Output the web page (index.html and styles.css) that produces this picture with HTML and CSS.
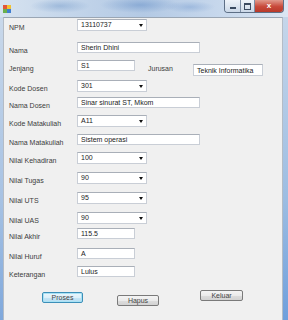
FILE: index.html
```html
<!DOCTYPE html>
<html lang="id">
<head>
  <meta charset="UTF-8">
  <meta name="viewport" content="width=device-width, initial-scale=1.0">
  <title>Form Nilai Mahasiswa</title>
  <link rel="stylesheet" href="styles.css">
</head>
<body>
  <div class="window">
    <div class="titlebar">
      <div class="app-icon">
        <span class="sq sq-red"></span><span class="sq sq-yellow"></span>
        <span class="sq sq-green"></span><span class="sq sq-blue"></span>
      </div>
      <div class="caption-buttons">
        <div class="cap-btn cap-min"><span class="min-glyph"></span></div>
        <div class="cap-btn cap-max"><span class="max-glyph"></span></div>
        <div class="cap-btn cap-close">x</div>
      </div>
    </div>
    <div class="frame">
      <div class="frame-left"></div>
      <div class="client">
        <div class="form">
          <label class="lbl">NPM</label>
          <div class="combo">13110737<span class="arrow"></span></div>

          <label class="lbl">Nama</label>
          <div class="tb tb-wide">Sherin Dhini</div>

          <label class="lbl">Jenjang</label>
          <div class="inline">
            <div class="tb tb-short">S1</div>
            <label class="lbl lbl-inline">Jurusan</label>
            <div class="tb tb-mid">Teknik Informatika</div>
          </div>

          <label class="lbl">Kode Dosen</label>
          <div class="combo">301<span class="arrow"></span></div>

          <label class="lbl">Nama Dosen</label>
          <div class="tb tb-wide">Sinar sinurat ST, Mkom</div>

          <label class="lbl">Kode Matakuliah</label>
          <div class="combo">A11<span class="arrow"></span></div>

          <label class="lbl">Nama Matakuliah</label>
          <div class="tb tb-wide">Sistem operasi</div>

          <label class="lbl">Nilai Kehadiran</label>
          <div class="combo">100<span class="arrow"></span></div>

          <label class="lbl">Nilai Tugas</label>
          <div class="combo">90<span class="arrow"></span></div>

          <label class="lbl">Nilai UTS</label>
          <div class="combo">95<span class="arrow"></span></div>

          <label class="lbl">Nilai UAS</label>
          <div class="combo">90<span class="arrow"></span></div>

          <label class="lbl">Nilai Akhir</label>
          <div class="tb tb-short">115.5</div>

          <label class="lbl">Nilai Huruf</label>
          <div class="tb tb-short">A</div>

          <label class="lbl">Keterangan</label>
          <div class="tb tb-short">Lulus</div>

          <div class="actions">
            <button class="btn btn-proses">Proses</button>
            <button class="btn btn-hapus">Hapus</button>
            <button class="btn btn-keluar">Keluar</button>
          </div>
        </div>
      </div>
      <div class="frame-right"></div>
    </div>
  </div>
</body>
</html>
```

FILE: styles.css
```css
body {
  margin: 0;
  font-family: "Liberation Sans", Arial, sans-serif;
  background: #f0f0f0;
}
.window {
  width: 288px;
  height: 320px;
  display: flex;
  flex-direction: column;
  overflow: hidden;
  background: #b9cde6;
}
.titlebar {
  height: 17px;
  flex-shrink: 0;
  display: flex;
  justify-content: space-between;
  align-items: flex-start;
  background:
    radial-gradient(ellipse 30px 7px at 60px 6px, rgba(110, 150, 200, 0.45), transparent),
    radial-gradient(ellipse 40px 8px at 140px 5px, rgba(90, 135, 195, 0.45), transparent),
    radial-gradient(ellipse 25px 6px at 190px 7px, rgba(110, 150, 205, 0.4), transparent),
    linear-gradient(to right, #d6e2ef 0%, #c3d5ea 25%, #b3c9e4 50%, #c6d7ec 75%, #dbe6f3 100%);
}
.app-icon {
  margin: 5px 0 0 3px;
  width: 8px;
  height: 8px;
  display: grid;
  grid-template-columns: 4px 4px;
  grid-template-rows: 4px 4px;
}
.sq-red { background: #e2563a; }
.sq-yellow { background: #f3c22f; }
.sq-green { background: #6ab04c; }
.sq-blue { background: #3f7ed1; }
.caption-buttons {
  display: flex;
  margin-right: 4px;
  border: 1px solid #5d6f86;
  border-top: none;
  border-radius: 0 0 4px 4px;
  overflow: hidden;
  height: 12px;
}
.cap-btn {
  display: flex;
  align-items: center;
  justify-content: center;
  background: linear-gradient(#eef3f9, #cbd8e8);
}
.cap-min {
  width: 15px;
  border-right: 1px solid #7d8ea5;
}
.cap-max {
  width: 13px;
  border-right: 1px solid #7d8ea5;
}
.min-glyph {
  width: 6px;
  height: 2px;
  margin-top: 4px;
  background: #3a4a60;
}
.max-glyph {
  width: 5px;
  height: 4px;
  border: 1px solid #3a4a60;
  border-top-width: 2px;
}
.cap-close {
  width: 28px;
  background: linear-gradient(#e09a8d, #c8493a 55%, #b83a2b);
  color: #fff;
  font-size: 8px;
  font-weight: bold;
  line-height: 1;
}
.frame {
  flex: 1;
  display: flex;
}
.frame-left {
  width: 3px;
  background: linear-gradient(#c9d8ea, #a7c2e3 60%, #7fa8dc);
}
.frame-right {
  width: 5px;
  background: linear-gradient(#c5d6ea, #9dbde2 60%, #6f9fdc);
}
.client {
  flex: 1;
  background: #f0f0f0;
  border-top: 1px solid #9aa6b4;
  border-left: 1px solid #b4bcc6;
  border-right: 1px solid #b4bcc6;
}
.form {
  display: grid;
  grid-template-columns: 68px 1fr;
  grid-template-rows: 23px 18px 20px 17px 18px 19px 18px 20px 20px 20px 16px 20px 18px 20px auto;
  padding: 1px 0 0 5px;
  font-size: 7px;
  color: #333;
}
.lbl {
  padding-top: 4px;
  line-height: 9px;
  color: #3c3c3c;
}
.inline {
  display: flex;
  align-items: flex-start;
}
.lbl-inline {
  margin-left: 13px;
  width: 45px;
}
.tb, .combo {
  box-sizing: border-box;
  background: #fff;
  border: 1px solid #c9ced6;
  border-top-color: #a9afb8;
  padding-left: 3px;
  line-height: 9px;
  color: #222;
  white-space: nowrap;
}
.tb {
  height: 11px;
}
.tb-wide { width: 123px; }
.tb-short { width: 58px; }
.tb-mid {
  width: 70px;
  height: 12px;
  margin-top: 4px;
  padding-top: 1px;
}
.combo {
  width: 70px;
  height: 12px;
  display: flex;
  justify-content: space-between;
  align-items: flex-start;
  padding-right: 3px;
  line-height: 10px;
}
.arrow {
  margin-top: 4px;
  width: 0;
  height: 0;
  border-left: 2px solid transparent;
  border-right: 2px solid transparent;
  border-top: 3px solid #111;
}
.actions {
  grid-column: 1 / -1;
  display: flex;
  align-items: flex-start;
  padding-left: 33px;
}
.btn {
  box-sizing: border-box;
  height: 11px;
  padding: 0;
  font-family: "Liberation Sans", Arial, sans-serif;
  font-size: 7px;
  line-height: 9px;
  color: #444;
  background: linear-gradient(#f4f4f4 0%, #ebebeb 50%, #dddddd 51%, #d2d2d2 100%);
  border: 1px solid #7a7a7a;
  border-radius: 2px;
}
.btn-proses {
  width: 41px;
  margin-top: 6px;
  border-color: #3c8fb8;
  box-shadow: inset 0 0 0 1px #a9e2f5;
  background: linear-gradient(#eaf6fc 0%, #dcf0fa 50%, #c4e5f6 51%, #b7dcf0 100%);
}
.btn-hapus {
  width: 42px;
  margin: 9px 0 0 34px;
}
.btn-keluar {
  width: 43px;
  margin: 4px 0 0 41px;
}
```
